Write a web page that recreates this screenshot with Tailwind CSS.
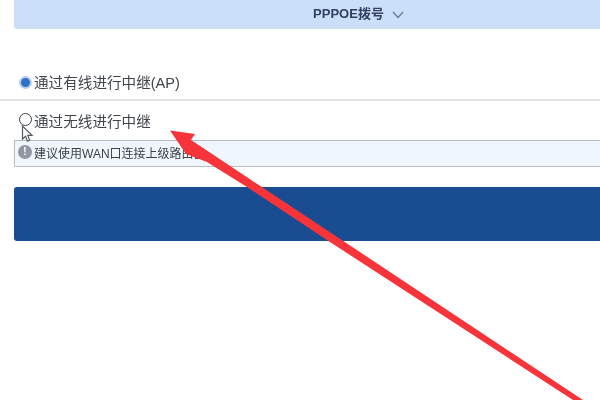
<!DOCTYPE html>
<html lang="zh-CN">
<head>
    <meta charset="UTF-8">
    <title>PPPOE拨号</title>
    <script src="https://cdn.jsdelivr.net/npm/@tailwindcss/browser@4"></script>
</head>
<body class="bg-white">
    <div class="relative w-[600px] h-[400px] overflow-hidden blur-[0.5px] font-['Liberation_Sans','Noto_Sans_CJK_SC',sans-serif]">
        <div class="pl-[14px]">
            <!-- 顶部拨号栏 -->
            <div class="h-[29px] bg-[#cbe0f8] rounded-bl-[3px] flex items-center justify-center gap-[8px] pb-[2px]">
                <span class="ml-[103px] text-[13px] font-bold text-[#2f3f5f]">PPPOE拨号</span>
                <svg class="w-[12px] h-[8px] mt-[2px]" viewBox="0 0 12 8" fill="none" stroke="#64769a" stroke-width="1.2"><path d="M1 1l5 5.500L11 1"/></svg>
            </div>

            <!-- 有线中继 -->
            <div class="mt-[42px] h-[30px] border-b-2 border-[#e2e2e2] flex items-start pt-[2px] -ml-[14px] pl-[19px] gap-[2px]">
                <span class="w-[13px] h-[13px] mt-[3px] rounded-full bg-[#2f6fc4] border-2 border-[#b5cdec] shrink-0"></span>
                <span class="text-[14.6px] leading-[20px] text-[#3f454d] whitespace-nowrap">通过有线进行中继(AP)</span>
            </div>

            <!-- 无线中继 -->
            <div class="h-[39px] flex items-start pt-[11px] -ml-[14px] pl-[19px] gap-[2px]">
                <span class="w-[13px] h-[13px] mt-[1px] rounded-full bg-white border-[1.5px] border-[#3d4148] shrink-0"></span>
                <span class="text-[14.6px] leading-[20px] text-[#3f454d] whitespace-nowrap">通过无线进行中继</span>
            </div>

            <!-- 提示 -->
            <div class="h-[27px] bg-[#f0f6fd] border border-r-0 border-[#b9bcc0] flex items-center pl-[3px] gap-[2px]">
                <span class="w-[14px] h-[14px] -mt-[3px] rounded-full bg-[#8f97a5] text-white text-[10px] leading-[14px] font-bold text-center shrink-0">!</span>
                <span class="mt-[1px] text-[12px] text-[#3d4148] whitespace-nowrap">建议使用WAN口连接上级路由器</span>
            </div>

            <!-- 蓝色按钮 -->
            <div class="mt-[20px] h-[54px] bg-[#1a4c92] rounded-l-[3px]"></div>
        </div>

        <!-- 鼠标指针 -->
        <svg class="absolute left-[21px] top-[125px] w-[13px] h-[19px]" viewBox="0 0 13 19" fill="#fff" stroke="#555b63" stroke-width="1.2"><path d="M1.500 1v13l3-2.800 2 5 2.200-1-2-4.800h4.300z"/></svg>

        <!-- 红色箭头 -->
        <svg class="absolute left-0 top-0 w-[600px] h-[400px]" viewBox="0 0 600 400" fill="#f6343a"><path d="M170 130.500L195 134 191 140 583 400 573 400 330 242 247 187 207 162 186 154z"/></svg>
    </div>
</body>
</html>
